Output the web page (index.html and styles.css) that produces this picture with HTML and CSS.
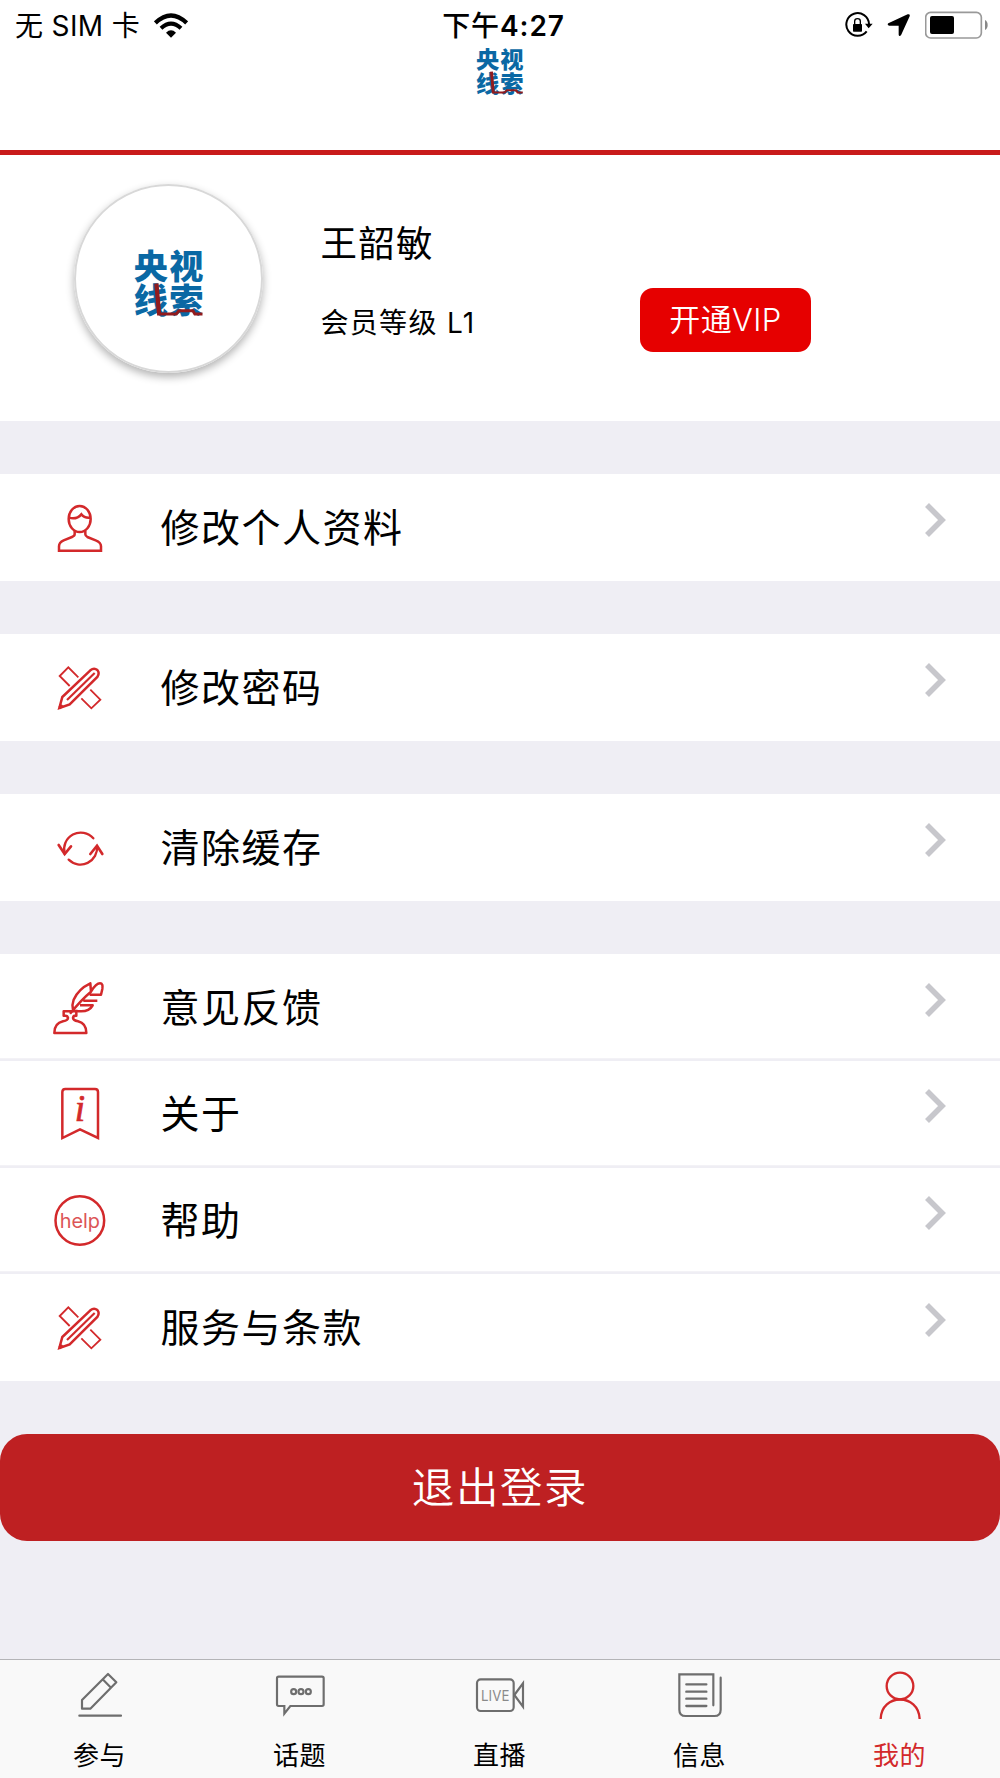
FILE: index.html
```html
<!DOCTYPE html>
<html lang="zh-CN">
<head>
<meta charset="utf-8">
<title>我的</title>
<link rel="stylesheet" href="styles.css">
</head>
<body>
<svg class="defs" width="0" height="0" aria-hidden="true">
  <symbol id="logo" viewBox="252 238 204 202" overflow="visible">
    <g class="logo-text">
      <text x="248" y="327" textLength="210">央视</text>
      <text x="248" y="430" textLength="210">线索</text>
    </g>
    <path d="M316 342 L324 433" fill="none" stroke="#921b1d" stroke-width="13"/>
    <path d="M318 434 H376 L384 424 H426 L432 434 H455" fill="none" stroke="#921b1d" stroke-width="9"/>
  </symbol>
  <symbol id="chevron" viewBox="0 0 21 34">
    <path d="M2 2 L17 17 L2 32" fill="none" stroke="#c7c7cc" stroke-width="5.6"/>
  </symbol>
  <symbol id="design" viewBox="60 533 180 180">
    <g fill="none" stroke="#d3292b" stroke-width="5.500">
      <path d="M119 617 L89 587 L115 561 L145 591 M181 628 L211 658 L184 684 L154 654"/>
      <path stroke-width="7.500" d="M88 683 L97 650 L181 570 Q192 561 202 569 Q210 578 202 590 L119 672 Z"/>
      <path stroke-width="6.500" d="M111 659 L194 578"/>
      <path stroke-width="9" d="M88 683 L98 675"/>
    </g>
  </symbol>
</svg>

<header class="header">
  <div class="status">
    <div class="status-left"><span>无 SIM 卡</span>
      <svg width="34" height="25" viewBox="464 35 102 75"><g fill="none" stroke="#000"><path d="M468 65 Q515 20 562 65" stroke-width="13"/><path d="M485 81 Q515 53 545 81" stroke-width="12"/></g><path d="M500 94 Q515 80 530 94 L515 109 Z"/></svg>
    </div>
    <div class="status-time"><span class="period">下午</span>4:27</div>
    <div class="status-right">
      <svg width="28" height="26" viewBox="1032 34 84 78"><path d="M1097 92 A34 34 0 1 1 1104 70" fill="none" stroke="#000" stroke-width="6"/><path d="M1092 69 H1115 L1103 83 Z"/><rect x="1056" y="70" width="27" height="23" rx="2"/><path d="M1061 71 V62 Q1061 54 1069.500 54 Q1078 54 1078 62 V71" fill="none" stroke="#000" stroke-width="4"/></svg>
      <svg width="24" height="24" viewBox="1161 38 72 72"><path d="M1165 69 L1223 42 Q1231 40 1229 48 L1203 105 Q1197 110 1196 103 V76 H1168 Q1160 74 1165 69 Z"/></svg>
      <svg width="64" height="28" viewBox="1275 30 192 84"><rect x="1277" y="34" width="167" height="77" rx="15" fill="none" stroke="#999" stroke-width="5"/><rect x="1290" y="45" width="72" height="54" rx="6"/><path d="M1455 57 Q1463 61 1463 72 Q1463 83 1455 87 Z" fill="#888"/></svg>
    </div>
  </div>
  <svg class="brand"><use href="#logo"/></svg>
</header>

<section class="profile">
  <div class="avatar"><svg width="68" height="67"><use href="#logo"/></svg></div>
  <div class="who">
    <div class="name">王韶敏</div>
    <div class="level">会员等级 L1</div>
  </div>
  <button class="vip">开通VIP</button>
</section>

<main class="menu">
  <div class="group">
    <div class="row">
      <svg class="icon" viewBox="60 53 180 180"><g fill="none" stroke="#d3292b" stroke-width="7.500"><ellipse cx="149" cy="116" rx="33" ry="39"/><path d="M116 112 Q140 119 154 102 Q163 114 181 112 M134 151 V162 Q134 167 126 170 L101 180 Q87 186 87 198 V211 H213 V198 Q213 186 197 180 L172 170 Q166 167 166 162 V151"/></g></svg>
      <span class="label">修改个人资料</span><svg class="chev"><use href="#chevron"/></svg>
    </div>
  </div>
  <div class="group">
    <div class="row"><svg class="icon"><use href="#design"/></svg><span class="label">修改密码</span><svg class="chev"><use href="#chevron"/></svg></div>
  </div>
  <div class="group">
    <div class="row">
      <svg class="icon" viewBox="60 53 180 180"><g fill="none" stroke="#d3292b" stroke-width="7" stroke-linecap="round"><path d="M190 114 A50 50 0 0 0 104 160 M116 178 A50 50 0 0 0 201 137"/><path d="M86 134 L104 161 L123 138 M181 161 L201 136 L217 161" stroke-width="8"/></g></svg>
      <span class="label">清除缓存</span><svg class="chev"><use href="#chevron"/></svg>
    </div>
  </div>
  <div class="group">
    <div class="row">
      <svg class="icon" viewBox="60 533 180 180"><g fill="none" stroke="#d3292b" stroke-width="7.500" stroke-linejoin="round"><path d="M73 698 Q73 669 99 663 Q114 660 114 653 Q113 646 106 646 H101 V633 H139 V646 Q130 645 129 653 Q130 660 144 663 Q169 669 169 698 Z"/><path d="M120 640 Q155 597 183 574 L181 549 Q145 566 131 598 Q125 614 129 629 M183 574 Q198 549 210 549 Q220 549 217 566 L213 583 H179 M160 601 H202 M150 615 H188 Q176 638 136 631"/></g></svg>
      <span class="label">意见反馈</span><svg class="chev"><use href="#chevron"/></svg>
    </div>
    <div class="row">
      <svg class="icon" viewBox="60 73 180 180"><path d="M97 235 V97 Q97 88 106 88 H195 Q204 88 204 97 V235 L150 209 Z" fill="none" stroke="#d3292b" stroke-width="7.500"/><text class="info-mark" x="134" y="184">i</text></svg>
      <span class="label">关于</span><svg class="chev"><use href="#chevron"/></svg>
    </div>
    <div class="row">
      <svg class="icon" viewBox="60 393 180 180"><circle cx="149.500" cy="481.500" r="73" fill="none" stroke="#d3292b" stroke-width="7.500"/><text class="help-mark" x="89" y="503" textLength="121" lengthAdjust="spacingAndGlyphs">help</text></svg>
      <span class="label">帮助</span><svg class="chev"><use href="#chevron"/></svg>
    </div>
    <div class="row"><svg class="icon"><use href="#design"/></svg><span class="label">服务与条款</span><svg class="chev"><use href="#chevron"/></svg></div>
  </div>
  <button class="logout">退出登录</button>
</main>

<nav class="tabs">
  <a class="tab"><svg viewBox="210 84 180 162"><g fill="none" stroke="#6e6e6e" stroke-width="6.500" stroke-linejoin="round"><path d="M246 206 V180 L324 102 L349 127 L271 206 Z M308 118 L333 143"/><path d="M238 227 H363" stroke-linecap="round"/></g></svg><span>参与</span></a>
  <a class="tab"><svg viewBox="810 84 180 162"><g fill="none" stroke="#6e6e6e" stroke-width="6.500"><path d="M836 110 H966 Q971 110 971 115 V193 Q971 198 966 198 H871 L853 221 V198 H836 Q831 198 831 193 V115 Q831 110 836 110 Z"/><circle cx="881" cy="155" r="7.500"/><circle cx="903" cy="155" r="7.500"/><circle cx="925" cy="155" r="7.500"/></g></svg><span>话题</span></a>
  <a class="tab"><svg viewBox="1410 84 180 162"><g fill="none" stroke="#6e6e6e" stroke-width="6.500"><rect x="1431" y="118" width="110" height="95" rx="11"/><path d="M1543 165 L1569 130 V200 Z"/></g><text class="live-mark" x="1443" y="184" textLength="86" lengthAdjust="spacingAndGlyphs">LIVE</text></svg><span>直播</span></a>
  <a class="tab"><svg viewBox="510 84 180 162"><g fill="none" stroke="#6e6e6e" stroke-width="6.500" stroke-linecap="round"><path d="M640 196 V103 H538 V209 Q538 228 557 228 H643 Q662 228 662 209 V113"/><path d="M559 133 H619 M559 155 H619 M559 176 H619 M559 198 H619" stroke-width="7"/></g></svg><span>信息</span></a>
  <a class="tab active"><svg viewBox="1110 84 180 162"><g fill="none" stroke="#d3292b" stroke-width="7"><circle cx="1200" cy="138" r="40"/><path d="M1142 237 C1144 159 1256 159 1259 237"/></g></svg><span>我的</span></a>
</nav>
</body>
</html>
```
FILE: styles.css
```css
* { box-sizing: border-box; }

body {
  margin: 0;
  width: 1000px;
  height: 1778px;
  display: flex;
  flex-direction: column;
  background: #efeef4;
  color: #000;
  font-family: Inter, "Noto Sans CJK SC", sans-serif;
  overflow: hidden;
}

svg { display: block; flex: none; }
.defs { position: absolute; }

button { border: 0; padding: 0; font-family: inherit; color: #fff; }

.header {
  height: 154.67px;
  flex: none;
  background: #fff;
  border-bottom: 5px solid #c91b1b;
}

.status {
  height: 48px;
  display: grid;
  grid-template-columns: 1fr auto 1fr;
  align-items: center;
  padding: 0 11px 0 15px;
  font-size: 28px;
  line-height: 48px;
}
.status-left { display: flex; align-items: center; gap: 14px; padding-top: 1px; letter-spacing: .35px; }
.status-time { font-weight: 600; padding: 2px 0 0 3px; letter-spacing: .9px; }
.period { font-weight: 500; }
.status-right { display: flex; align-items: center; justify-content: flex-end; gap: 14px; }

.brand { width: 46px; height: 46px; margin: 0 auto; overflow: visible; }
.logo-text { font-family: "Noto Sans CJK SC", sans-serif; font-weight: 900; font-size: 103px; fill: #0a68a4; }

.profile {
  height: 266.33px;
  flex: none;
  display: flex;
  align-items: flex-start;
  padding: 29px 0 0 74px;
  background: #fff;
}
.avatar {
  width: 189px;
  height: 189px;
  border-radius: 50%;
  border: 2px solid #d8d8d8;
  box-shadow: 0 4px 8px rgba(0, 0, 0, .3);
  display: flex;
  align-items: center;
  justify-content: center;
}
.avatar svg { margin-top: 9px; overflow: visible; }
.who { width: 319px; margin-left: 57.5px; margin-right: .5px; padding-top: 35px; }
.name { font-size: 36.5px; line-height: 50px; letter-spacing: 1.2px; }
.level { font-size: 28px; line-height: 40px; margin-top: 34px; letter-spacing: 1.3px; white-space: nowrap; }
.vip {
  width: 171px;
  height: 64px;
  margin-top: 104px;
  border-radius: 13px;
  background: #e60000;
  font-size: 31px;
  font-weight: 350;
  letter-spacing: .4px;
  line-height: 64px;
}

.menu { flex: 1; display: flex; flex-direction: column; gap: 53.33px; padding-top: 53.33px; }
.group { background: #fff; flex: none; }
.row {
  height: 106.67px;
  display: flex;
  align-items: center;
  padding: 0 54px 0 50px;
}
.row:not(:last-child) { box-shadow: inset 0 -2.67px #efeef4; }
.icon { width: 60px; height: 60px; }
.label { flex: 1; margin-left: 50.5px; font-size: 39px; line-height: 60px; letter-spacing: 1.5px; }
.chev { width: 21px; height: 34px; margin-bottom: 16px; }
.info-mark { font: italic 400 112px "Liberation Serif", serif; fill: #d3292b; stroke: #d3292b; stroke-width: 2px; }
.help-mark { font: 400 59px Inter, sans-serif; fill: #dc5557; }

.logout {
  width: 100%;
  height: 106.67px;
  flex: none;
  border-radius: 27px;
  background: #be2022;
  font-size: 42.5px;
  font-weight: 350;
  line-height: 106px;
  letter-spacing: 1.6px;
}

.tabs {
  height: 119.33px;
  flex: none;
  display: flex;
  background: #f9f9f9;
  border-top: 1.33px solid #b4b4b7;
}
.tab {
  flex: 1;
  display: flex;
  flex-direction: column;
  align-items: center;
  padding-top: 8.33px;
  font-size: 26px;
  line-height: 36px;
  letter-spacing: .4px;
}
.tab svg { width: 60px; height: 54px; }
.tab span { margin: 15.5px 1px 0 0; }
.tab.active { color: #d3292b; }
.live-mark { font: 400 43px Inter, sans-serif; fill: #8a8a8a; }
```
